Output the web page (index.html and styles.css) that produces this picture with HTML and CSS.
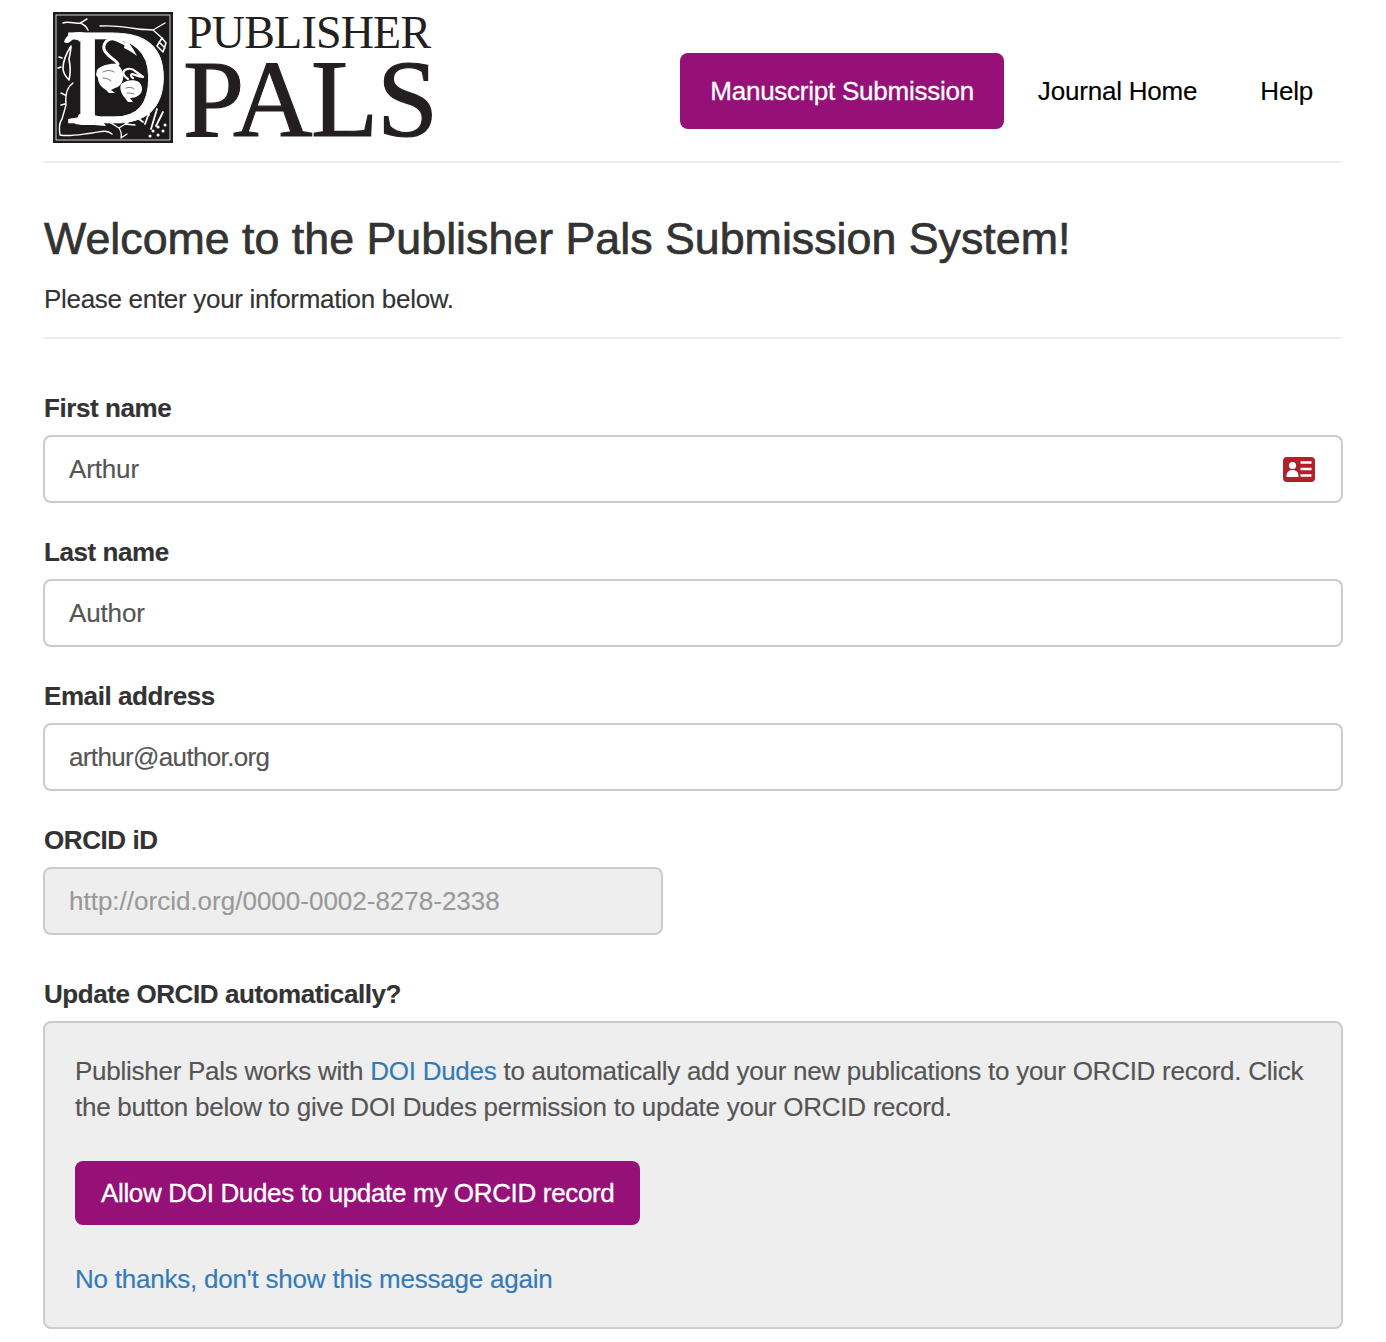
FILE: index.html
```html
<!DOCTYPE html>
<html lang="en">
<head>
<meta charset="utf-8">
<title>Publisher Pals</title>
<link rel="stylesheet" href="styles.css">
</head>
<body>
<div class="container">
  <header class="site-header">
    <div class="logo">
      <svg class="logo-mark" viewBox="0 0 120 131" width="120" height="131" aria-hidden="true">
        <rect x="0" y="0" width="120" height="131" fill="#1c1a1b"/>
        <rect x="3" y="3" width="114" height="125" fill="none" stroke="#fff" stroke-width="0.8"/>
        <text class="logo-initial" x="11" y="111" transform="scale(1.05 1)">D</text>
        <!-- woodcut ornament around the initial -->
        <path d="M11 30c2-7 8-10 16-10l6 1-6 9c-3-3-7-3-9-1-2 2-5 3-7 1z" fill="#fff"/>
        <path d="M22 112l4-10h14l2 10c2-4 6-5 8-2l3 4-12-1-8 0-4 0z" fill="#fff"/>
        <g fill="none" stroke="#fff" stroke-linecap="round" stroke-linejoin="round">
          <path d="M10 11c6-2 12 1 17 0 3-1 5-3 7-4M27 11c3 1 6 3 8 7" stroke-width="1.5"/>
          <path d="M47 14c14-1 26 1 38 3 6 1 10 0 15 1M100 18l12-7M100 18l9 8" stroke-width="1.3"/>
          <path d="M109 26l-5 8 6 6 3-9zM106 30l6 6" stroke-width="1.6"/>
          <path d="M18 34c-5 8-8 15-8 22 0 4 3 9 6 12 2-8 1-16 0-21 1-5 2-9 2-13zM9 46l-3-1M8 55l-3 1" stroke-width="1.6"/>
          <path d="M20 71c-6 4-8 12-7 22l-4 14c-3 4-3 10-2 16 10 2 22-1 32-2 8-1 14-4 20 1M12 83l-4-2M12 92l-4 1" stroke-width="1.4"/>
          <path d="M42 104c8 1 16 7 24 12 2 3 3 6 2 10M66 116l14-9M72 112l10 1M68 126l6-4" stroke-width="1.3"/>
          <path d="M100 90l-8 22M104 97l-6 20M110 100l-7 14M96 103l-6-4M90 110l-4-3" stroke-width="1.8"/>
          <path d="M100 119h.1M105 115h.1M110 119h.1M105 123h.1M112 113h.1M97 124h.1" stroke-width="3"/>
        </g>
        <!-- swans -->
        <g class="swans" stroke-linecap="round" stroke-linejoin="round">
          <path d="M61 52c-3-5-12-8-14-15-1-6 4-11 10-10 5 1 9 5 14 6" fill="none" stroke="#fff" stroke-width="3"/>
          <path d="M68 30c4 0 7 4 12 14-4-3-8-6-13-8z" fill="#fff"/>
          <path d="M40 58c4-5 14-7 20-6 5 4 7 10 6 15-1 5-4 8-8 9l-4 2 4 3-6 0-3-3c-5-3-8-7-8-12l-2-3z" fill="#fff"/>
          <path d="M46 60c4-2 8-2 11 0M46 66c3 0 6 1 8 3" fill="none" stroke="#1c1a1b" stroke-width="0.6"/>
          <path d="M71 67c-5-3-6-7-3-9 4-2 8-1 10 1l8 6c-4 0-8-2-11-3-2 1-1 3 1 4" fill="none" stroke="#fff" stroke-width="2.2"/>
          <path d="M64 72c5-4 13-5 18-2 3 3 4 8 2 11-3 4-7 5-11 5l3 4-5 0-3-4c-3-3-6-9-4-14z" fill="#fff"/>
          <path d="M69 76c3-1 6-1 8 1M70 81c2 0 5 0 7 1" fill="none" stroke="#1c1a1b" stroke-width="0.6"/>
        </g>
      </svg>
      <div class="logo-type">
        <span class="logo-top">PUBLISHER</span>
        <span class="logo-bottom">PALS</span>
      </div>
    </div>
    <nav class="nav">
      <a class="nav-link nav-active" href="#">Manuscript Submission</a>
      <a class="nav-link nav-journal" href="#">Journal Home</a>
      <a class="nav-link" href="#">Help</a>
    </nav>
  </header>

  <section class="intro">
    <h1>Welcome to the Publisher Pals Submission System!</h1>
    <p>Please enter your information below.</p>
  </section>

  <form class="form">
    <div class="field">
      <label class="label">First name</label>
      <div class="input input-icon">
        <span>Arthur</span>
        <svg class="card-icon" viewBox="0 0 32 25" width="32" height="25" aria-hidden="true">
          <rect width="32" height="25" rx="4" fill="#b2202c"/>
          <circle cx="9.5" cy="8.5" r="3.6" fill="#fff"/>
          <path d="M3.5 20c0-5 2-7 6-7s6 2 6 7z" fill="#fff"/>
          <path d="M17.5 5.5h11M17.5 12h11M17.5 18.5h11" stroke="#fff" stroke-width="2.4" fill="none"/>
        </svg>
      </div>
    </div>
    <div class="field">
      <label class="label">Last name</label>
      <div class="input"><span>Author</span></div>
    </div>
    <div class="field">
      <label class="label">Email address</label>
      <div class="input"><span class="tight">arthur@author.org</span></div>
    </div>
    <div class="field">
      <label class="label">ORCID iD</label>
      <div class="input input-disabled"><span>http://orcid.org/0000-0002-8278-2338</span></div>
    </div>
    <div class="field field-last">
      <label class="label">Update ORCID automatically?</label>
      <div class="panel">
        <p class="panel-text">Publisher Pals works with <a href="#">DOI Dudes</a> to automatically add your new publications to your ORCID record. Click the button below to give DOI Dudes permission to update your ORCID record.</p>
        <a class="btn" href="#">Allow DOI Dudes to update my ORCID record</a>
        <a class="panel-link" href="#">No thanks, don't show this message again</a>
      </div>
    </div>
  </form>
</div>
</body>
</html>
```
FILE: styles.css
```css
* { box-sizing: border-box; }
html, body { margin: 0; padding: 0; background: #fff; }
body {
  font-family: "Liberation Sans", Arial, sans-serif;
  font-size: 26px;
  line-height: 36px;
  color: #333;
  -webkit-text-stroke: 0.15px;
}
a { text-decoration: none; }
.container { width: 1300px; margin-left: 43px; }

.site-header {
  height: 163px;
  border-bottom: 2px solid #eee;
  display: flex;
  justify-content: space-between;
  align-items: flex-start;
}
.logo { display: flex; margin: 12px 0 0 10px; }
.logo-mark { display: block; flex: none; overflow: visible; }
.logo-initial {
  font-family: "Liberation Serif", serif;
  font-size: 138px;
  fill: #fff;
  stroke: #fff;
  stroke-width: 0.7px;
}
.swans { transform: translate(4px, 0); }
.logo-type {
  display: flex;
  flex-direction: column;
  margin-left: 13px;
  font-family: "Liberation Serif", serif;
  color: #231f20;
}
.logo-top { font-size: 46px; line-height: 42px; height: 42px; margin-left: 1px; letter-spacing: -0.8px; white-space: nowrap; -webkit-text-stroke: 0; }
.logo-bottom {
  font-size: 110px;
  line-height: 90px;
  height: 90px;
  margin-left: -3px;
  letter-spacing: -1.2px;
  white-space: nowrap;
  -webkit-text-stroke: 1.2px #231f20;
}

.nav { display: flex; margin-top: 53px; letter-spacing: -0.2px; }
.nav-link {
  display: block;
  height: 76px;
  line-height: 76px;
  padding: 0 30px;
  margin-left: 3px;
  color: #000;
  border-radius: 8px;
}
.nav-journal { margin-left: 4px; }
.nav-active {
  background: #951177;
  color: #fff;
  margin-left: 0;
  letter-spacing: -0.25px;
  -webkit-text-stroke: 0.3px #fff;
}

.intro { height: 176px; border-bottom: 2px solid #eee; padding-top: 48px; }
.intro h1 {
  margin: 0 0 0 1px;
  font-size: 44.75px;
  line-height: 54px;
  font-weight: 400;
  color: #333;
  -webkit-text-stroke: 0.7px #333;
}
.intro p { margin: 16px 0 0 1px; color: #333; letter-spacing: -0.3px; }

.form { display: block; padding-top: 51px; }
.field { height: 144px; }
.label {
  display: block;
  font-weight: 700;
  height: 36px;
  line-height: 36px;
  margin-left: 1px;
  margin-bottom: 9px;
  letter-spacing: -0.42px;
}
.input {
  height: 68px;
  border: 2px solid #ccc;
  border-radius: 8px;
  background: #fff;
  color: #555;
  padding: 0 26px 0 24px;
  display: flex;
  align-items: center;
  justify-content: space-between;
  letter-spacing: -0.15px;
}
.tight { letter-spacing: -0.65px; }
.card-icon { display: block; }
.input-disabled { width: 620px; background: #eee; color: #999; letter-spacing: 0; }
.field-last { height: auto; margin-top: 10px; }
.panel {
  height: 308px;
  border: 2px solid #ccc;
  border-radius: 8px;
  background: #eee;
  padding: 30px 30px 0;
  color: #555;
}
.panel-text { margin: 0; letter-spacing: -0.26px; }
.panel-text a, .panel-link { color: #337ab7; }
.btn {
  display: inline-block;
  margin-top: 36px;
  height: 64px;
  line-height: 64px;
  padding: 0 26px;
  background: #951177;
  color: #fff;
  border-radius: 8px;
  letter-spacing: -0.34px;
  -webkit-text-stroke: 0.35px #fff;
}
.panel-link { display: block; margin-top: 36px; letter-spacing: -0.22px; }
```
